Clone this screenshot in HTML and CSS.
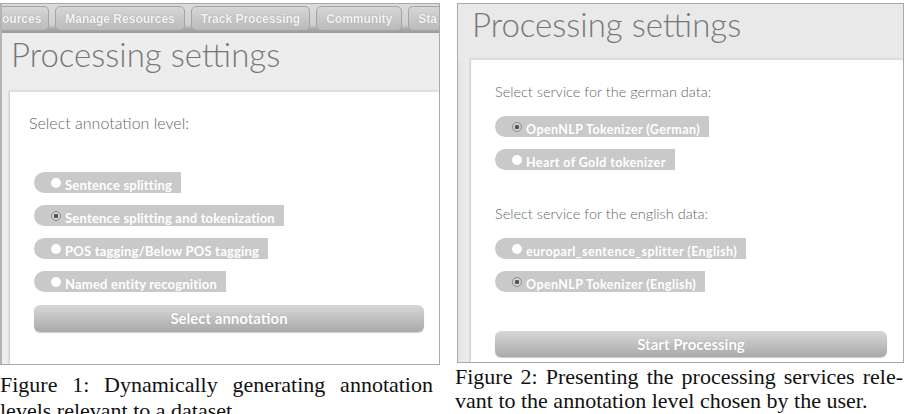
FILE: index.html
```html
<!DOCTYPE html>
<html lang="en">
<head>
    <meta charset="UTF-8">
    <title>Processing settings</title>
    <link rel="stylesheet" href="styles.css">
</head>
<body>
    <div class="page">
        <div class="figure fig-one">
            <div class="shot shot-one">
                <div class="tabs">
                    <span class="tab tab-cut">ources</span>
                    <span class="tab">Manage Resources</span>
                    <span class="tab">Track Processing</span>
                    <span class="tab">Community</span>
                    <span class="tab tab-end">Sta</span>
                </div>
                <h2 class="title">Processing settings</h2>
                <div class="card card-one">
                    <p class="prompt">Select annotation level:</p>
                    <div class="options options-one">
                        <div class="option"><span class="radio"></span><span class="option-text">Sentence splitting</span></div>
                        <div class="option"><span class="radio checked"></span><span class="option-text">Sentence splitting and tokenization</span></div>
                        <div class="option"><span class="radio"></span><span class="option-text">POS tagging/Below POS tagging</span></div>
                        <div class="option"><span class="radio"></span><span class="option-text">Named entity recognition</span></div>
                    </div>
                    <div class="action action-one">Select annotation</div>
                </div>
            </div>
            <p class="caption caption-one">
                <span class="caption-line">Figure 1: Dynamically generating annotation</span>
                <span class="caption-rest">levels relevant to a dataset.</span>
            </p>
        </div>

        <div class="figure fig-two">
            <div class="shot shot-two">
                <h2 class="title">Processing settings</h2>
                <div class="body-two">
                    <div class="card card-two">
                        <p class="prompt">Select service for the german data:</p>
                        <div class="options options-two">
                            <div class="option"><span class="radio checked"></span><span class="option-text">OpenNLP Tokenizer (German)</span></div>
                            <div class="option"><span class="radio"></span><span class="option-text">Heart of Gold tokenizer</span></div>
                        </div>
                        <p class="prompt prompt-second">Select service for the english data:</p>
                        <div class="options options-two">
                            <div class="option"><span class="radio"></span><span class="option-text">europarl_sentence_splitter (English)</span></div>
                            <div class="option"><span class="radio checked"></span><span class="option-text">OpenNLP Tokenizer (English)</span></div>
                        </div>
                        <div class="action action-two">Start Processing</div>
                    </div>
                </div>
            </div>
            <p class="caption caption-two">
                <span class="caption-line">Figure 2: Presenting the processing services rele-</span>
                <span class="caption-rest">vant to the annotation level chosen by the user.</span>
            </p>
        </div>
    </div>
</body>
</html>
```

FILE: styles.css
```css
body {
    margin: 0;
    background-color: #fff;
    font-family: "Lato", "Liberation Sans", sans-serif;
    overflow: hidden;
}
.page {
    display: flex;
    width: 905px;
    height: 414px;
    padding-top: 3px;
    box-sizing: border-box;
}
.figure {
    display: flex;
    flex-direction: column;
    flex-shrink: 0;
}
.fig-one {
    width: 440px;
}
.fig-two {
    width: 450px;
    margin-left: 15px;
}

/* screenshot frames */
.shot {
    border: 1px solid #a9a9a9;
    background-color: #ededed;
    box-sizing: border-box;
    overflow: hidden;
    display: flex;
    flex-direction: column;
    flex-shrink: 0;
}
.shot-one {
    height: 362px;
    border-left: 2px solid #b4b4b4;
}
.shot-two {
    height: 360px;
    margin-left: 2px;
    width: 447px;
    background-color: #e9e9e9;
}

/* tab bar */
.tabs {
    display: flex;
    gap: 6px;
    height: 29px;
    padding-top: 2px;
    box-sizing: border-box;
    background: linear-gradient(#dcdcdc 0%, #d0d0d0 70%, #a6a6a6 88%, #9c9c9c 100%);
    overflow: hidden;
    flex-shrink: 0;
}
.tab {
    flex-shrink: 0;
    height: 25px;
    line-height: 24px;
    padding: 0 9px;
    border: 1px solid #a4a4a4;
    border-radius: 5px;
    box-sizing: border-box;
    background: linear-gradient(#d6d6d6, #bababa);
    color: #f6f6f6;
    font-family: "Liberation Sans", Arial, sans-serif;
    font-size: 12px;
    font-weight: bold;
    text-shadow: 0 0 1px #8a8a8a;
}
.tab-cut {
    padding-left: 0;
    padding-right: 7px;
    border-left: none;
    border-radius: 0 5px 5px 0;
}
.tab-end {
    flex: 1;
    border-right: none;
    border-radius: 5px 0 0 5px;
}

/* heading */
.title {
    margin: 1px 0 0 9px;
    font-size: 33px;
    line-height: 40px;
    font-weight: 300;
    color: #787878;
}
.shot-one .title {
    margin-bottom: 17px;
}
.shot-two .title {
    margin: 0 0 15px 14px;
}

/* white panels */
.card {
    flex: 1;
    background-color: #fff;
    box-shadow: -1px 0 2px rgba(0, 0, 0, 0.18);
    border-top: 1px solid #dedede;
}
.card-one {
    margin-left: 8px;
    padding: 21px 15px 0 19px;
}
.body-two {
    flex: 1;
    display: flex;
    background: linear-gradient(90deg, #e4e4e4, #eeeeee 12px);
}
.card-two {
    margin-left: 13px;
    padding: 22px 16px 0 24px;
}
.prompt {
    margin: 0;
    font-size: 16px;
    line-height: 20px;
    font-weight: 300;
    color: #666;
}
.card-two .prompt {
    font-size: 14.5px;
}
.prompt-second {
    margin-top: 34px;
}

/* radio rows */
.options {
    display: flex;
    flex-direction: column;
    align-items: flex-start;
    gap: 12px;
}
.options-one {
    margin: 39px 0 0 5px;
}
.options-two {
    margin-top: 14px;
}
.option {
    display: flex;
    align-items: flex-start;
    height: 21px;
    padding-left: 17px;
    padding-right: 9px;
    border-radius: 11px 0 0 11px;
    background-color: #c9c9c9;
    box-sizing: border-box;
}
.radio {
    width: 10px;
    height: 10px;
    margin-top: 6px;
    margin-right: 4px;
    border-radius: 50%;
    background-color: #fff;
    box-sizing: border-box;
    flex-shrink: 0;
}
.radio.checked {
    background: radial-gradient(circle, #555 0, #555 2px, #d2d2d2 2.5px);
    border: 1px solid #8c8c8c;
}
.option-text {
    padding-top: 7px;
    font-size: 13px;
    line-height: 13px;
    letter-spacing: 0.2px;
    font-weight: bold;
    color: #fff;
    white-space: nowrap;
}
.options-two .option-text {
    font-size: 12.5px;
    letter-spacing: 0.4px;
}

/* big buttons */
.action {
    height: 27px;
    line-height: 27px;
    border-radius: 6px;
    background: linear-gradient(#d8d8d8, #a9a9a9);
    box-shadow: 0 1px 1px rgba(0, 0, 0, 0.2);
    color: #fff;
    text-align: center;
    font-size: 15px;
    font-weight: bold;
    text-shadow: 0 0 1px #999;
}
.action-one {
    margin: 13px 0 0 5px;
}
.action-two {
    margin-top: 39px;
    height: 26px;
    line-height: 26px;
}

/* captions */
.caption {
    margin: 8px 0 0;
    font-family: "Liberation Serif", "Times New Roman", serif;
    font-size: 22px;
    line-height: 24px;
    color: #111;
}
.caption-one {
    width: 433px;
    margin-top: 7px;
    line-height: 26px;
}
.caption-two {
    width: 448px;
    margin-top: 2px;
}
.caption-two .caption-line {
    word-spacing: 1.6px;
}
.caption-line {
    display: block;
    text-align: justify;
    text-align-last: justify;
}
.caption-rest {
    display: block;
    white-space: nowrap;
}
```
